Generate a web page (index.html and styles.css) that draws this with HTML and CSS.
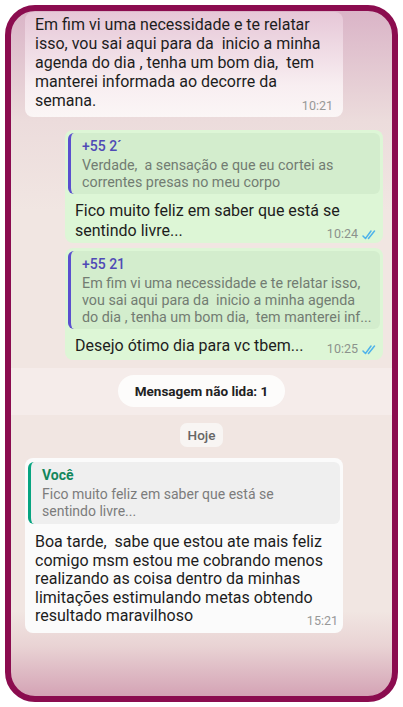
FILE: index.html
```html
<!DOCTYPE html>
<html lang="pt-BR">
<head>
<meta charset="UTF-8">
<meta name="viewport" content="width=device-width, initial-scale=1.0">
<title>Conversa</title>
<link rel="stylesheet" href="styles.css">
</head>
<body>
<div class="phone">
    <div class="chat">
        <div class="bubble in first">
            <div class="text">Em fim vi uma necessidade e te relatar isso, vou sai aqui para da&nbsp; inicio a minha agenda do dia , tenha um bom dia,&nbsp; tem manterei informada ao decorre da semana.<span class="meta">10:21</span></div>
        </div>

        <div class="bubble out">
            <div class="quote purple">
                <div class="quote-name">+55 2´</div>
                <div class="quote-text">Verdade,&nbsp; a sensação e que eu cortei as correntes presas no meu corpo</div>
            </div>
            <div class="text">Fico muito feliz em saber que está se sentindo livre...<span class="meta">10:24 <svg class="ticks" width="17" height="11" viewBox="0 0 17 11"><path d="M1 7l2.5 2.5L9 2M6.5 9.5L12.5 2" fill="none" stroke="#4fb3ea" stroke-width="1.5" stroke-linecap="round" stroke-linejoin="round"/></svg></span></div>
        </div>

        <div class="bubble out second">
            <div class="quote purple">
                <div class="quote-name">+55 21</div>
                <div class="quote-text">Em fim vi uma necessidade e te relatar isso, vou sai aqui para da&nbsp; inicio a minha agenda do dia , tenha um bom dia,&nbsp; tem manterei inf...</div>
            </div>
            <div class="text">Desejo ótimo dia para vc tbem...<span class="meta">10:25 <svg class="ticks" width="17" height="11" viewBox="0 0 17 11"><path d="M1 7l2.5 2.5L9 2M6.5 9.5L12.5 2" fill="none" stroke="#4fb3ea" stroke-width="1.5" stroke-linecap="round" stroke-linejoin="round"/></svg></span></div>
        </div>

        <div class="unread-band">
            <div class="unread-pill">Mensagem não lida: 1</div>
        </div>

        <div class="day-pill">Hoje</div>

        <div class="bubble in last">
            <div class="quote green">
                <div class="quote-name">Você</div>
                <div class="quote-text">Fico muito feliz em saber que está se sentindo livre...</div>
            </div>
            <div class="text">Boa tarde,&nbsp; sabe que estou ate mais feliz comigo msm estou me cobrando menos realizando as coisa dentro da minhas limitações estimulando metas obtendo resultado maravilhoso<span class="meta">15:21</span></div>
        </div>
    </div>
</div>
</body>
</html>
```

FILE: styles.css
```css
body {
    margin: 0;
    padding: 0;
    background-color: #fff;
    font-family: Roboto, "Noto Sans", sans-serif;
}
.phone {
    box-sizing: border-box;
    width: 393px;
    height: 697px;
    margin: 5px;
    border: 6px solid #8b0c4f;
    border-radius: 30px;
    overflow: hidden;
    background: linear-gradient(to bottom, #dab4c7 0px, #ecdcdc 110px, #f1e6e2 200px, #f1e6e2 600px, #e9d3d4 635px, #d4a3b5 685px);
}
.chat {
    display: flex;
    flex-direction: column;
    padding-top: 1px;
}
.bubble {
    box-sizing: border-box;
    width: 318px;
    border-radius: 8px;
    padding: 3px 3px 2px;
    color: #1d1d1d;
}
.bubble.in {
    margin-left: 14px;
    background-color: #fbfbfb;
}
.bubble.first {
    background: linear-gradient(to bottom, #e6c7d7, #f8eef1 70%, #fbf6f6);
    padding: 3px 3px 7px;
}
.bubble.out {
    margin: 13px 0 0 54px;
    background-color: #ddf6d6;
}
.bubble.second {
    margin-top: 5px;
    padding-bottom: 4px;
}
.bubble.last {
    margin-top: 11px;
    padding: 4px 3px 7px;
}
.text {
    display: flow-root;
    font-size: 16px;
    line-height: 19px;
    padding: 0 7px;
}
.bubble.out .text {
    line-height: 20px;
    padding: 7px 1px 0 7px;
}
.bubble.last .text {
    line-height: 18.5px;
    padding: 9px 2px 0 7px;
}
.meta {
    float: right;
    display: flex;
    align-items: center;
    gap: 4px;
    margin: 8px 0 -8px 10px;
    font-size: 12.5px;
    line-height: 14px;
    color: #989898;
}
.bubble.out .meta {
    margin: 6px 0 -6px 10px;
    color: #8c928c;
}
.bubble.last .meta {
    margin: 7px 0 -7px 10px;
}
.ticks {
    display: block;
}
.quote {
    border-radius: 6px;
    padding: 5px 8px 3px 11px;
    border-left: 3px solid;
}
.quote.purple {
    background-color: #d3edcd;
    border-left-color: #5a4fcf;
}
.quote.green {
    background-color: #efefef;
    border-left-color: #07a480;
    padding: 5px 16px 4px 11px;
}
.quote-name {
    font-size: 14px;
    font-weight: 500;
    line-height: 17px;
    margin-bottom: 2px;
}
.purple .quote-name {
    color: #4f4ab6;
}
.green .quote-name {
    color: #13875d;
    font-weight: 700;
}
.quote-text {
    font-size: 14.3px;
    line-height: 17px;
    color: #727c72;
}
.green .quote-text {
    font-size: 14px;
    color: #7c7c7c;
}
.unread-band {
    display: flex;
    justify-content: center;
    margin-top: 8px;
    padding: 7px 0 8px;
    background-color: #f5ecea;
}
.unread-pill {
    width: 167px;
    height: 32px;
    line-height: 32px;
    text-align: center;
    border-radius: 16px;
    background-color: #fdfcfb;
    font-size: 13.5px;
    font-weight: 700;
    color: #222;
}
.day-pill {
    align-self: center;
    margin-top: 8px;
    padding: 0 8px;
    height: 24px;
    line-height: 24px;
    border-radius: 7px;
    background-color: #f8f5f3;
    font-size: 13.5px;
    font-weight: 500;
    color: #666;
}
```
